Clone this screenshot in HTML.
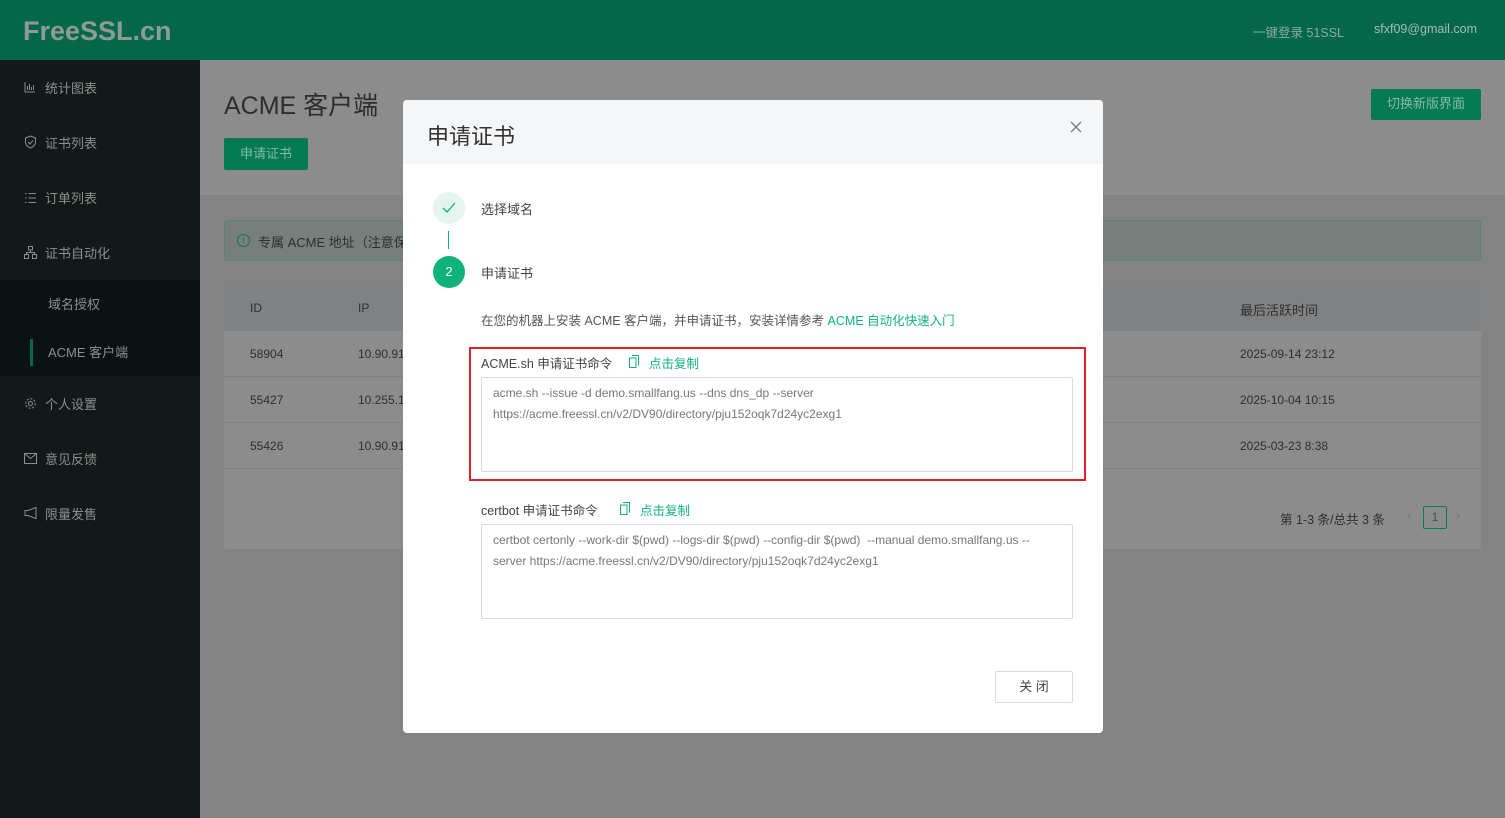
<!DOCTYPE html>
<html><head><meta charset="utf-8"><style>
*{margin:0;padding:0;box-sizing:border-box}
body{width:1505px;height:818px;overflow:hidden;background:#838383;font-family:"Liberation Sans","Noto Sans CJK SC",sans-serif;font-size:13px;color:#333;position:relative}
.a{position:absolute;white-space:nowrap}
.hdr{left:0;top:0;width:1505px;height:60px;background:#04674a}
.side{left:0;top:60px;width:200px;height:758px;background:#111a19}
.sub{left:0;top:280px;width:200px;height:96px;background:#0b1312}
.mi{color:#8a8f8e;font-size:13px}
.mt{left:200px;top:60px;width:1305px;height:135px;background:#8c8c8c}
.td{color:#2e2e2e;font-size:12px}
.modal{left:403px;top:100px;width:700px;height:633px;background:#fff;border-radius:4px;overflow:hidden}
.mh{left:0;top:0;width:700px;height:64px;background:#f5f6f7}
.ta{border:1px solid #d9d9d9;border-radius:2px;background:#fff;color:#777;font-size:12px;line-height:21px;padding:5px 11px;white-space:normal}
.g{color:#10b27c}
</style></head><body>
<div class="a hdr"></div>
<div class="a" style="left:23px;top:16px;font-size:27px;font-weight:bold;color:#8e9a94">FreeSSL.cn</div>
<div class="a" style="left:1253px;top:22px;color:#8bab9e;font-size:12.5px">一键登录 51SSL</div>
<div class="a" style="left:1374px;top:22px;color:#a9bcb4;font-size:12.5px">sfxf09@gmail.com</div>
<div class="a side"></div>
<div class="a sub"></div>
<div class="a" style="left:30px;top:339px;width:3px;height:27px;background:#04674a"></div>
<svg class="a" style="left:24px;top:81px" width="12" height="12" viewBox="0 0 12 12"><path d="M1 1v10h10M3.5 9V5M5.5 9V3M7.5 9V6M9.5 9V4" stroke="#8a8f8e" fill="none"/></svg>
<div class="a mi" style="left:45px;top:78px">统计图表</div>
<svg class="a" style="left:24px;top:135px" width="13" height="14" viewBox="0 0 13 14"><path d="M6.5 1L1.5 3v4c0 3 2.5 5 5 6 2.5-1 5-3 5-6V3z M4 7l2 2 3-3.5" stroke="#8a8f8e" fill="none"/></svg>
<div class="a mi" style="left:45px;top:133px">证书列表</div>
<svg class="a" style="left:24px;top:192px" width="13" height="12"><path d="M1 1.5h1.5M1 6h1.5M1 10.5h1.5M4.5 1.5H12M4.5 6H12M4.5 10.5H12" stroke="#8a8f8e"/></svg>
<div class="a mi" style="left:45px;top:188px">订单列表</div>
<svg class="a" style="left:24px;top:246px" width="13" height="13"><path d="M4.5 .5h4v3.5h-4zM.5 8.5h4v4h-4zM8.5 8.5h4v4h-4zM6.5 4v2.5M2.5 8.5v-2h8v2" stroke="#8a8f8e" fill="none"/></svg>
<div class="a mi" style="left:45px;top:243px">证书自动化</div>
<div class="a mi" style="left:48px;top:294px">域名授权</div>
<div class="a mi" style="left:48px;top:342px">ACME 客户端</div>
<svg class="a" style="left:24px;top:397px" width="13" height="13" viewBox="0 0 13 13"><circle cx="6.5" cy="6.5" r="2" stroke="#8a8f8e" fill="none"/><circle cx="6.5" cy="6.5" r="4.8" stroke="#8a8f8e" fill="none" stroke-dasharray="2.2 1.5"/></svg>
<div class="a mi" style="left:45px;top:394px">个人设置</div>
<svg class="a" style="left:24px;top:453px" width="13" height="11"><path d="M.5 .5h12v10H.5zM.5 .5l6 5 6-5" stroke="#8a8f8e" fill="none"/></svg>
<div class="a mi" style="left:45px;top:449px">意见反馈</div>
<svg class="a" style="left:24px;top:507px" width="13" height="12"><path d="M12 .5v11L4 8.5H1V3.5h3z" stroke="#8a8f8e" fill="none"/></svg>
<div class="a mi" style="left:45px;top:504px">限量发售</div>
<div class="a mt"></div>
<div class="a" style="left:224px;top:86px;font-size:25px;color:#2d2d2d">ACME 客户端</div>
<div class="a" style="left:224px;top:138px;width:84px;height:32px;background:#047a52;border-radius:2px;color:#8ab9a5;text-align:center;line-height:31px">申请证书</div>
<div class="a" style="left:1371px;top:89px;width:110px;height:31px;background:#047a52;border-radius:2px;color:#8ab9a5;text-align:center;line-height:30px">切换新版界面</div>
<div class="a" style="left:224px;top:220px;width:1257px;height:41px;background:#787e7c;border:1px solid #4f8a72;border-radius:3px"></div>
<div class="a" style="left:237px;top:234px;width:13px;height:13px;border:1px solid #077a52;border-radius:50%;color:#077a52;font-size:9px;text-align:center;line-height:11px">i</div>
<div class="a td" style="left:258px;top:232px;font-size:13px">专属 ACME 地址（注意保</div>
<div class="a" style="left:224px;top:286px;width:1257px;height:263px;background:#8c8c8c;border-radius:3px"></div>
<div class="a" style="left:224px;top:286px;width:1257px;height:45px;background:#808183;border-radius:3px 3px 0 0"></div>
<div class="a" style="left:224px;top:376px;width:1257px;height:1px;background:#808080"></div>
<div class="a" style="left:224px;top:422px;width:1257px;height:1px;background:#808080"></div>
<div class="a" style="left:224px;top:468px;width:1257px;height:1px;background:#808080"></div>
<div class="a td" style="left:250px;top:301px">ID</div><div class="a td" style="left:358px;top:301px">IP</div>
<div class="a td" style="left:1240px;top:300px;font-size:13px">最后活跃时间</div>
<div class="a td" style="left:250px;top:347px">58904</div><div class="a td" style="left:358px;top:347px">10.90.91</div><div class="a td" style="left:1240px;top:347px">2025-09-14 23:12</div>
<div class="a td" style="left:250px;top:393px">55427</div><div class="a td" style="left:358px;top:393px">10.255.1</div><div class="a td" style="left:1240px;top:393px">2025-10-04 10:15</div>
<div class="a td" style="left:250px;top:439px">55426</div><div class="a td" style="left:358px;top:439px">10.90.91</div><div class="a td" style="left:1240px;top:439px">2025-03-23 8:38</div>
<div class="a td" style="left:1280px;top:509px;font-size:12.5px">第 1-3 条/总共 3 条</div>
<div class="a" style="left:1407px;top:508px;color:#777">‹</div>
<div class="a" style="left:1423px;top:506px;width:24px;height:23px;border:1px solid #047a52;border-radius:2px;text-align:center;line-height:21px;color:#2e5e4b;font-size:12px">1</div>
<div class="a" style="left:1456px;top:508px;color:#777">›</div>

<div class="a modal">
<div class="a mh"></div>
<div class="a" style="left:24px;top:19px;font-size:22px;color:#333">申请证书</div>
<svg class="a" style="left:667px;top:21px" width="12" height="12"><path d="M1 1l10 10M11 1L1 11" stroke="#777" stroke-width="1.3"/></svg>
<div class="a" style="left:30px;top:92px;width:32px;height:32px;border-radius:50%;background:#e3f5ee"></div>
<svg class="a" style="left:39px;top:102px" width="14" height="12"><path d="M1 6l4 4 8-9" stroke="#10b27c" fill="none" stroke-width="1.3"/></svg>
<div class="a" style="left:45px;top:131px;width:1px;height:18px;background:#10b27c"></div>
<div class="a" style="left:30px;top:156px;width:32px;height:32px;border-radius:50%;background:#10b27c;color:#fff;text-align:center;line-height:32px;font-size:13px">2</div>
<div class="a" style="left:78px;top:99px;color:#444">选择域名</div>
<div class="a" style="left:78px;top:163px;color:#444">申请证书</div>
<div class="a" style="left:78px;top:210px;color:#555;font-size:12.5px">在您的机器上安装 ACME 客户端，并申请证书，安装详情参考 <span class="g">ACME 自动化快速入门</span></div>
<div class="a" style="left:66px;top:247px;width:617px;height:134px;border:2px solid #e0202a"></div>
<div class="a" style="left:78px;top:253px;color:#444;font-size:12.5px">ACME.sh 申请证书命令</div>
<svg class="a" style="left:226px;top:255px" width="10" height="13"><path d="M3 .5h6.5v10M.5 3h6.5v9.5H.5z" stroke="#10b27c" fill="none"/></svg>
<div class="a g" style="left:246px;top:253px;font-size:12.5px">点击复制</div>
<div class="a ta" style="left:78px;top:277px;width:592px;height:95px">acme.sh --issue -d demo.smallfang.us --dns dns_dp --server https://acme.freessl.cn/v2/DV90/directory/pju152oqk7d24yc2exg1</div>
<div class="a" style="left:78px;top:400px;color:#444;font-size:12.5px">certbot 申请证书命令</div>
<svg class="a" style="left:217px;top:402px" width="10" height="13"><path d="M3 .5h6.5v10M.5 3h6.5v9.5H.5z" stroke="#10b27c" fill="none"/></svg>
<div class="a g" style="left:237px;top:400px;font-size:12.5px">点击复制</div>
<div class="a ta" style="left:78px;top:424px;width:592px;height:95px">certbot certonly --work-dir $(pwd) --logs-dir $(pwd) --config-dir $(pwd)&nbsp; --manual demo.smallfang.us --server https://acme.freessl.cn/v2/DV90/directory/pju152oqk7d24yc2exg1</div>
<div class="a" style="left:592px;top:571px;width:78px;height:32px;border:1px solid #d9d9d9;border-radius:2px;text-align:center;line-height:30px;color:#444">关 闭</div>
</div>
</body></html>
